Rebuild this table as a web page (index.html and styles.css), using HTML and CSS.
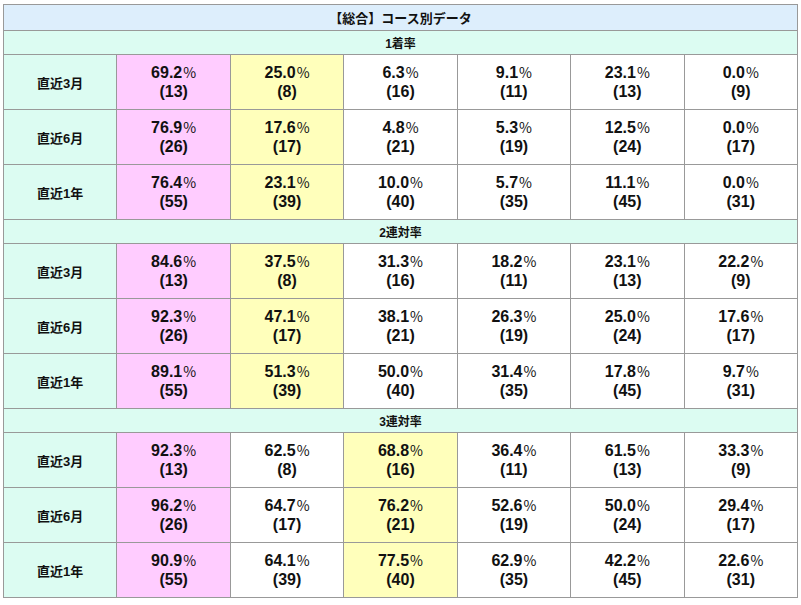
FILE: index.html
```html
<!DOCTYPE html>
<html lang="ja">
<head>
<meta charset="utf-8">
<link rel="stylesheet" href="styles.css">
</head>
<body>
<div class="wrap">
<table class="stats">
<colgroup><col><col><col><col><col><col><col></colgroup>
<tbody>
<tr><th colspan="7" class="title">【総合】コース別データ</th></tr>
<tr><th colspan="7" class="sub">1着率</th></tr>
<tr><th class="label">直近3月</th>
<td class="pink"><b>69.2</b><small>%</small><br><b>(13)</b></td>
<td class="yellow"><b>25.0</b><small>%</small><br><b>(8)</b></td>
<td><b>6.3</b><small>%</small><br><b>(16)</b></td>
<td><b>9.1</b><small>%</small><br><b>(11)</b></td>
<td><b>23.1</b><small>%</small><br><b>(13)</b></td>
<td><b>0.0</b><small>%</small><br><b>(9)</b></td></tr>
<tr><th class="label">直近6月</th>
<td class="pink"><b>76.9</b><small>%</small><br><b>(26)</b></td>
<td class="yellow"><b>17.6</b><small>%</small><br><b>(17)</b></td>
<td><b>4.8</b><small>%</small><br><b>(21)</b></td>
<td><b>5.3</b><small>%</small><br><b>(19)</b></td>
<td><b>12.5</b><small>%</small><br><b>(24)</b></td>
<td><b>0.0</b><small>%</small><br><b>(17)</b></td></tr>
<tr><th class="label">直近1年</th>
<td class="pink"><b>76.4</b><small>%</small><br><b>(55)</b></td>
<td class="yellow"><b>23.1</b><small>%</small><br><b>(39)</b></td>
<td><b>10.0</b><small>%</small><br><b>(40)</b></td>
<td><b>5.7</b><small>%</small><br><b>(35)</b></td>
<td><b>11.1</b><small>%</small><br><b>(45)</b></td>
<td><b>0.0</b><small>%</small><br><b>(31)</b></td></tr>
<tr><th colspan="7" class="sub">2連対率</th></tr>
<tr><th class="label">直近3月</th>
<td class="pink"><b>84.6</b><small>%</small><br><b>(13)</b></td>
<td class="yellow"><b>37.5</b><small>%</small><br><b>(8)</b></td>
<td><b>31.3</b><small>%</small><br><b>(16)</b></td>
<td><b>18.2</b><small>%</small><br><b>(11)</b></td>
<td><b>23.1</b><small>%</small><br><b>(13)</b></td>
<td><b>22.2</b><small>%</small><br><b>(9)</b></td></tr>
<tr><th class="label">直近6月</th>
<td class="pink"><b>92.3</b><small>%</small><br><b>(26)</b></td>
<td class="yellow"><b>47.1</b><small>%</small><br><b>(17)</b></td>
<td><b>38.1</b><small>%</small><br><b>(21)</b></td>
<td><b>26.3</b><small>%</small><br><b>(19)</b></td>
<td><b>25.0</b><small>%</small><br><b>(24)</b></td>
<td><b>17.6</b><small>%</small><br><b>(17)</b></td></tr>
<tr><th class="label">直近1年</th>
<td class="pink"><b>89.1</b><small>%</small><br><b>(55)</b></td>
<td class="yellow"><b>51.3</b><small>%</small><br><b>(39)</b></td>
<td><b>50.0</b><small>%</small><br><b>(40)</b></td>
<td><b>31.4</b><small>%</small><br><b>(35)</b></td>
<td><b>17.8</b><small>%</small><br><b>(45)</b></td>
<td><b>9.7</b><small>%</small><br><b>(31)</b></td></tr>
<tr><th colspan="7" class="sub">3連対率</th></tr>
<tr><th class="label">直近3月</th>
<td class="pink"><b>92.3</b><small>%</small><br><b>(13)</b></td>
<td><b>62.5</b><small>%</small><br><b>(8)</b></td>
<td class="yellow"><b>68.8</b><small>%</small><br><b>(16)</b></td>
<td><b>36.4</b><small>%</small><br><b>(11)</b></td>
<td><b>61.5</b><small>%</small><br><b>(13)</b></td>
<td><b>33.3</b><small>%</small><br><b>(9)</b></td></tr>
<tr><th class="label">直近6月</th>
<td class="pink"><b>96.2</b><small>%</small><br><b>(26)</b></td>
<td><b>64.7</b><small>%</small><br><b>(17)</b></td>
<td class="yellow"><b>76.2</b><small>%</small><br><b>(21)</b></td>
<td><b>52.6</b><small>%</small><br><b>(19)</b></td>
<td><b>50.0</b><small>%</small><br><b>(24)</b></td>
<td><b>29.4</b><small>%</small><br><b>(17)</b></td></tr>
<tr><th class="label">直近1年</th>
<td class="pink"><b>90.9</b><small>%</small><br><b>(55)</b></td>
<td><b>64.1</b><small>%</small><br><b>(39)</b></td>
<td class="yellow"><b>77.5</b><small>%</small><br><b>(40)</b></td>
<td><b>62.9</b><small>%</small><br><b>(35)</b></td>
<td><b>42.2</b><small>%</small><br><b>(45)</b></td>
<td><b>22.6</b><small>%</small><br><b>(31)</b></td></tr>
</tbody>
</table>
</div>
</body>
</html>
```
FILE: styles.css
```css
html, body {
  margin: 0;
  padding: 0;
  background: #ffffff;
}
body {
  font-family: "Liberation Sans", Arial, "Noto Sans CJK JP", sans-serif;
  color: #111111;
}
.wrap {
  padding: 4px 4px 0 3px;
}
.stats {
  width: 795px;
  border-collapse: collapse;
  table-layout: fixed;
}
.stats col {
  width: 14.2857%;
}
.stats th, .stats td {
  border: 1px solid #999999;
  padding: 0;
  text-align: center;
  vertical-align: middle;
}
.title {
  background: #ddeefc;
  height: 25px;
  font-size: 13px;
  font-weight: bold;
  font-family: "Noto Sans CJK JP", sans-serif;
}
.sub {
  background: #dcfcf2;
  height: 23px;
  font-size: 12px;
  font-weight: bold;
  font-family: "Liberation Sans", "Noto Sans CJK JP", sans-serif;
}
.label {
  background: #dcfcf2;
  font-size: 13px;
  font-weight: bold;
  font-family: "Liberation Sans", "Noto Sans CJK JP", sans-serif;
}
.stats td {
  height: 54px;
  font-size: 16px;
  line-height: 19px;
  background: #ffffff;
}
.stats td b {
  font-weight: bold;
}
.stats td small {
  font-family: "Noto Sans CJK JP", sans-serif;
  font-size: 14px;
  font-weight: normal;
  margin-left: 1px;
}
.stats td.pink {
  background: #ffccff;
}
.stats td.yellow {
  background: #ffffbb;
}
```
